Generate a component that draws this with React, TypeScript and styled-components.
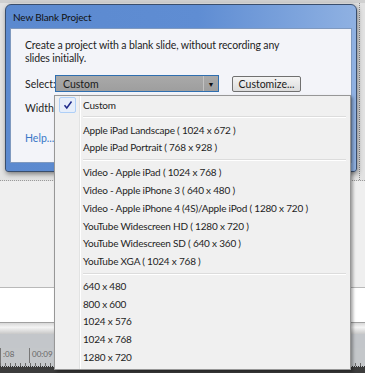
import React from 'react';
import styled, { createGlobalStyle } from 'styled-components';

const GlobalStyle = createGlobalStyle`
  html, body {
    margin: 0;
    padding: 0;
    width: 365px;
    height: 373px;
    overflow: hidden;
    font-family: Lato, "Noto Sans", sans-serif;
  }
`;

const Screen = styled.div`
  position: relative;
  width: 365px;
  height: 373px;
  overflow: hidden;
  display: flex;
  flex-direction: column;
  background: #e6e6e6;
`;

const TopArea = styled.div`
  height: 181px;
  background: #e2e2e2;
  border-bottom: 1px dotted #9a9a9a;
  border-top: 3px solid #d0d0d0;
  box-sizing: border-box;
  display: flex;
  justify-content: flex-end;
`;

const EdgeGuide = styled.div`
  width: 4px;
  border-left: 1px dotted #8a8a8a;
  margin-right: 1px;
`;

const Stage = styled.div`
  height: 106px;
  background: #efefef;
  border-bottom: 1px solid #b9b9b9;
`;

const WhiteStrip = styled.div`
  height: 34px;
  background: #ffffff;
`;

const GradientBar = styled.div`
  height: 11px;
  background: linear-gradient(#d8d8d8, #f4f4f4 40%, #c8c8c8);
  border-top: 1px solid #a0a0a0;
`;

const Track = styled.div`
  height: 14px;
  background: #c3c6ca;
`;

const Ruler = styled.div`
  height: 18px;
  display: flex;
  align-items: flex-start;
  font-size: 8px;
  color: #666;
  border-bottom: 1px dotted #333;
  background-image: repeating-linear-gradient(90deg, #6a6a6a 0 1px, transparent 1px 5px);
  background-size: 100% 3px;
  background-position: bottom left;
  background-repeat: no-repeat;
  background-color: #c4c7ca;
`;

const RulerMark = styled.span<{ $w: number }>`
  flex: none;
  width: ${({ $w }) => $w}px;
  border-left: 1px solid #777;
  padding-left: 2px;
  box-sizing: border-box;
  height: 15px;
  line-height: 12px;
`;

const BottomStrip = styled.div`
  flex: 1;
  background: #3c3c3c;
`;

/* dialog window on top of the app */
const Dialog = styled.div`
  position: absolute;
  left: 5px;
  top: 4px;
  width: 352px;
  height: 168px;
  box-sizing: border-box;
  border: 1px solid #3a4e6c;
  border-radius: 6px 6px 3px 3px;
  background: linear-gradient(90deg, #5b89cf 0%, #5f8dd3 55%, #8fb1e2 100%);
  box-shadow: 1px 2px 5px rgba(0, 0, 0, 0.45);
  display: flex;
  flex-direction: column;
  padding: 0 4px 8px 4px;
`;

const TitleBar = styled.div`
  height: 23px;
  display: flex;
  align-items: center;
  padding-left: 3px;
  font-size: 10px;
  letter-spacing: -0.15px;
  color: #111;
`;

const Client = styled.div`
  flex: 1;
  background: #f3f4f9;
  border: 1px solid #7f99bf;
  padding: 10px 14px 0 14px;
  font-size: 10.5px;
  color: #1e1e1e;
  display: flex;
  flex-direction: column;
`;

const Intro = styled.p`
  margin: 0;
  line-height: 13px;
  letter-spacing: -0.12px;
`;

const FormRow = styled.div<{ $top: number }>`
  display: flex;
  align-items: center;
  margin-top: ${({ $top }) => $top}px;
  height: 17px;
`;

const Label = styled.span`
  width: 30px;
`;

const Combo = styled.div`
  width: 164px;
  height: 17px;
  box-sizing: border-box;
  border: 1px solid #2f6fb0;
  background: linear-gradient(#a9a9a9, #9e9e9e);
  display: flex;
  align-items: center;
  padding-left: 7px;
  color: #1a1a1a;
`;

const ComboText = styled.span`
  flex: 1;
`;

const ComboArrow = styled.span`
  width: 14px;
  height: 100%;
  border-left: 1px solid #c2c2c2;
  display: flex;
  align-items: center;
  justify-content: center;
  font-size: 7px;
  color: #111;
`;

const Button = styled.div`
  margin-left: 13px;
  width: 69px;
  height: 16px;
  box-sizing: border-box;
  border: 1px solid #707070;
  border-radius: 2px;
  background: linear-gradient(#f4f4f4, #dcdcdc);
  display: flex;
  align-items: center;
  justify-content: center;
  color: #1a1a1a;
`;

const WidthInput = styled.div`
  width: 4px;
  height: 17px;
  border: 1px solid #888;
  border-right: none;
  background: #fff;
`;

const HelpLink = styled.span`
  margin-top: 16px;
  color: #3a78c8;
`;

/* open dropdown list over the dialog */
const Menu = styled.div`
  position: absolute;
  left: 54px;
  top: 95px;
  width: 297px;
  height: 275px;
  box-sizing: border-box;
  background: #f0f0f0;
  border: 1px solid #979797;
  box-shadow: 2px 2px 3px rgba(0, 0, 0, 0.35);
  padding: 0 2px 3px 2px;
  display: flex;
  flex-direction: column;
  font-size: 10px;
  letter-spacing: -0.2px;
  color: #1e1e1e;
  background-image: linear-gradient(90deg, transparent 24px, #e2e3e3 24px, #e2e3e3 25px, #ffffff 25px, #ffffff 26px, transparent 26px);
`;

const Item = styled.div`
  height: 17.8px;
  display: flex;
  align-items: center;
  padding-left: 26px;
  position: relative;
`;

const Check = styled.span`
  position: absolute;
  left: 2px;
  top: 1px;
  width: 17px;
  height: 16px;
  box-sizing: border-box;
  border: 1px solid #aecff7;
  border-radius: 2px;
  background: #e6eefa;
  display: flex;
  align-items: center;
  justify-content: center;
`;

const Separator = styled.div`
  height: 7px;
  margin-left: 26px;
  margin-right: 2px;
  display: flex;
  align-items: center;
  &::after {
    content: '';
    flex: 1;
    height: 1px;
    background: #dcdcdc;
    border-bottom: 1px solid #ffffff;
  }
`;

const groups = [
  ['Apple iPad Landscape ( 1024 x 672 )', 'Apple iPad Portrait ( 768 x 928 )'],
  [
    'Video - Apple iPad ( 1024 x 768 )',
    'Video - Apple iPhone 3 ( 640 x 480 )',
    'Video - Apple iPhone 4 (4S)/Apple iPod ( 1280 x 720 )',
    'YouTube Widescreen HD ( 1280 x 720 )',
    'YouTube Widescreen SD ( 640 x 360 )',
    'YouTube XGA ( 1024 x 768 )',
  ],
  ['640 x 480', '800 x 600', '1024 x 576', '1024 x 768', '1280 x 720'],
];

const CheckMark = () => (
  <svg width="10" height="10" viewBox="0 0 10 10">
    <path d="M1.5 5.2 L3.8 8 L8.5 1.5" fill="none" stroke="#1f2a8a" strokeWidth="1.5" />
  </svg>
);

export default function App() {
  return (
    <>
      <GlobalStyle />
      <Screen>
        <TopArea>
          <EdgeGuide />
        </TopArea>
        <Stage />
        <WhiteStrip />
        <GradientBar />
        <Track />
        <Ruler>
          <RulerMark $w={29}>:08</RulerMark>
          <RulerMark $w={30}>00:09</RulerMark>
          <RulerMark $w={306}>00:10</RulerMark>
        </Ruler>
        <BottomStrip />

        <Dialog>
          <TitleBar>New Blank Project</TitleBar>
          <Client>
            <Intro>
              Create a project with a blank slide, without recording any
              <br />
              slides initially.
            </Intro>
            <FormRow $top={10}>
              <Label>Select:</Label>
              <Combo>
                <ComboText>Custom</ComboText>
                <ComboArrow>▼</ComboArrow>
              </Combo>
              <Button>Customize...</Button>
            </FormRow>
            <FormRow $top={7}>
              <Label>Width:</Label>
              <WidthInput />
            </FormRow>
            <HelpLink>Help...</HelpLink>
          </Client>
        </Dialog>

        <Menu>
          <Item>
            <Check>
              <CheckMark />
            </Check>
            Custom
          </Item>
          {groups.map((g, i) => (
            <React.Fragment key={i}>
              <Separator />
              {g.map((t) => (
                <Item key={t}>{t}</Item>
              ))}
            </React.Fragment>
          ))}
        </Menu>
      </Screen>
    </>
  );
}
